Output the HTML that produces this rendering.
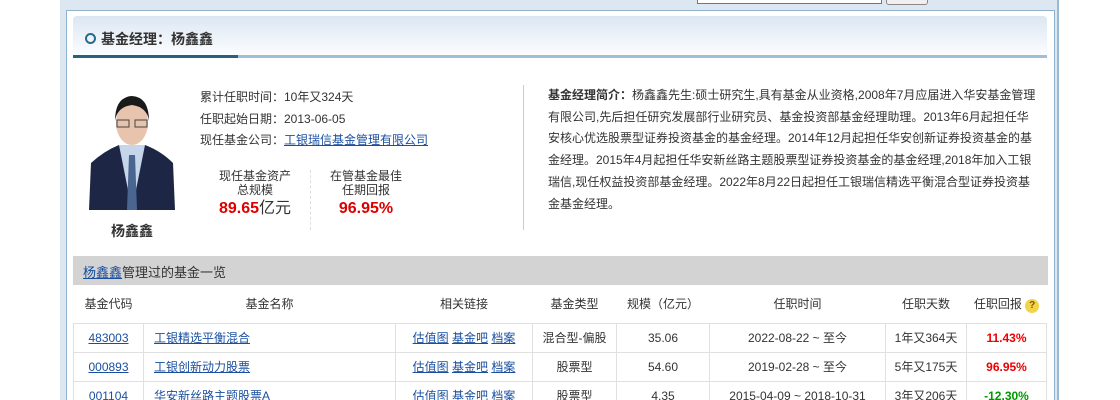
<!DOCTYPE html>
<html style="height:400px;overflow:hidden"><head><meta charset="utf-8"><style>
*{margin:0;padding:0;box-sizing:border-box}
body{width:1120px;height:400px;overflow:hidden;background:#fff;font-family:"Liberation Sans","Noto Sans CJK SC",sans-serif;font-size:12px;color:#333;position:relative}
.abs{position:absolute}
a{color:#1a4fa0;text-decoration:underline}
.frame{left:60px;top:-5px;width:999px;height:405px;background:#dde7f2;border-right:2px solid #9bb9d2;}
.inner{left:66px;top:10px;width:989px;height:390px;background:#fff;border:1px solid #8fb2cf;border-bottom:none}
.hdr{left:73px;top:16px;width:974px;height:42px;background:linear-gradient(#dce6f2,#fbfdff);border-radius:4px 4px 0 0;border-bottom:3px solid #9dbfd8}
.hdr:after{content:"";position:absolute;left:0;bottom:-3px;width:165px;height:3px;background:#24627f}
.hdr .t{position:absolute;left:28px;top:13px;font-size:14px;font-weight:bold;color:#333}
.hdr .o{position:absolute;left:12px;top:17px;width:11px;height:11px;border:2px solid #2a6a90;border-radius:50%}
.info div{height:21.5px}
.bio{left:548px;top:85px;width:490px;font-size:12px;line-height:21.7px;color:#333}
table{border-collapse:collapse;position:absolute;left:73px;top:285px;width:974px}
td,th{border:1px solid #e0e0e0;text-align:center;font-weight:normal;font-size:12px;height:29px}
th{height:38px;border-left:none;border-right:none;border-top:none}
td.l{text-align:left;padding-left:10px}
.red{color:#e00;font-weight:bold}.grn{color:#090;font-weight:bold}
</style></head><body>
<div class="abs frame"></div>
<div class="abs" style="left:697px;top:-6px;width:185px;height:10px;border:1px solid #777;background:#fff"></div>
<div class="abs" style="left:886px;top:-6px;width:42px;height:11px;border:1px solid #888;border-radius:3px;background:#f0f0f0"></div>
<div class="abs inner"></div>
<div class="abs hdr"><div class="o"></div><div class="t">基金经理：杨鑫鑫</div></div>
<svg class="abs" style="left:89px;top:93px" width="86" height="117" viewBox="0 0 86 117">
<rect width="86" height="117" fill="#fff"/>
<path d="M0 117 L2 70 Q15 58 30 52 L56 52 Q72 58 84 70 L86 117Z" fill="#1d2645"/>
<path d="M30 52 L43 117 L56 52Z" fill="#c6d6ea"/>
<path d="M40 62 L46 62 L48 117 L38 117Z" fill="#4a6690"/>
<ellipse cx="43" cy="30" rx="16" ry="22" fill="#e8c4ae"/>
<path d="M26 28 Q26 4 43 3 Q60 4 60 28 Q58 14 43 12 Q28 14 26 28Z" fill="#1a1a1a"/>
<rect x="28" y="27" width="12" height="7" fill="none" stroke="#444" stroke-width="1"/><rect x="46" y="27" width="12" height="7" fill="none" stroke="#444" stroke-width="1"/>
</svg>
<div class="abs" style="left:89px;top:221px;width:86px;text-align:center;font-size:14px;font-weight:bold;color:#333">杨鑫鑫</div>
<div class="abs info" style="left:200px;top:88px">
<div>累计任职时间：10年又324天</div>
<div>任职起始日期：2013-06-05</div>
<div>现任基金公司：<a>工银瑞信基金管理有限公司</a></div>
</div>
<div class="abs" style="left:205px;top:169px;width:100px;text-align:center;line-height:14px">现任基金资产<br>总规模<div style="margin-top:5px;font-size:16px"><b style="color:#d00">89.65</b>亿元</div></div>
<div class="abs" style="left:310px;top:170px;height:60px;border-left:1px dashed #ddd"></div>
<div class="abs" style="left:316px;top:169px;width:100px;text-align:center;line-height:14px">在管基金最佳<br>任期回报<div style="margin-top:5px;font-size:16px"><b style="color:#d00">96.95%</b></div></div>
<div class="abs" style="left:523px;top:85px;height:145px;border-left:1px solid #ccc"></div>
<div class="abs bio"><b>基金经理简介：</b>杨鑫鑫先生:硕士研究生,具有基金从业资格,2008年7月应届进入华安基金管理有限公司,先后担任研究发展部行业研究员、基金投资部基金经理助理。2013年6月起担任华安核心优选股票型证券投资基金的基金经理。2014年12月起担任华安创新证券投资基金的基金经理。2015年4月起担任华安新丝路主题股票型证券投资基金的基金经理,2018年加入工银瑞信,现任权益投资部基金经理。2022年8月22日起担任工银瑞信精选平衡混合型证券投资基金基金经理。</div>
<div class="abs" style="left:73px;top:256px;width:975px;height:29px;background:#d3d3d3;padding:6px 10px;font-size:13px"><a>杨鑫鑫</a>管理过的基金一览</div>
<table>
<tr><th style="width:70px">基金代码</th><th style="width:252px">基金名称</th><th style="width:137px">相关链接</th><th style="width:84px">基金类型</th><th style="width:93px">规模（亿元）</th><th style="width:176px">任职时间</th><th style="width:81px">任职天数</th><th>任职回报 <span style="display:inline-block;width:14px;height:14px;border-radius:50%;background:#f3d34a;color:#7a5a00;font-size:10px;font-weight:bold;line-height:14px">?</span></th></tr>
<tr><td><a>483003</a></td><td class="l"><a>工银精选平衡混合</a></td><td><a>估值图</a> <a>基金吧</a> <a>档案</a></td><td>混合型-偏股</td><td>35.06</td><td>2022-08-22 ~ 至今</td><td>1年又364天</td><td class="red">11.43%</td></tr>
<tr><td><a>000893</a></td><td class="l"><a>工银创新动力股票</a></td><td><a>估值图</a> <a>基金吧</a> <a>档案</a></td><td>股票型</td><td>54.60</td><td>2019-02-28 ~ 至今</td><td>5年又175天</td><td class="red">96.95%</td></tr>
<tr><td><a>001104</a></td><td class="l"><a>华安新丝路主题股票A</a></td><td><a>估值图</a> <a>基金吧</a> <a>档案</a></td><td>股票型</td><td>4.35</td><td>2015-04-09 ~ 2018-10-31</td><td>3年又206天</td><td class="grn">-12.30%</td></tr>
</table>
</body></html>
